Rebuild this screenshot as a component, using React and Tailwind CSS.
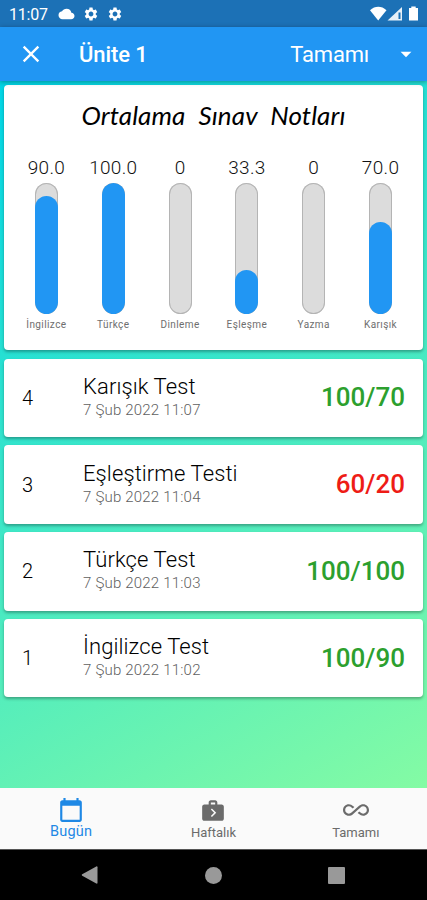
import React from "react";
import {
  MdAllInclusive,
  MdArrowDropDown,
  MdCalendarToday,
  MdClose,
  MdCloud,
  MdNextWeek,
  MdSettings,
} from "react-icons/md";

const averages = [
  { label: "İngilizce", value: "90.0", percent: 90 },
  { label: "Türkçe", value: "100.0", percent: 100 },
  { label: "Dinleme", value: "0", percent: 0 },
  { label: "Eşleşme", value: "33.3", percent: 33.3 },
  { label: "Yazma", value: "0", percent: 0 },
  { label: "Karışık", value: "70.0", percent: 70 },
];

const exams = [
  { id: 4, title: "Karışık Test", date: "7 Şub 2022 11:07", score: "100/70", passed: true },
  { id: 3, title: "Eşleştirme Testi", date: "7 Şub 2022 11:04", score: "60/20", passed: false },
  { id: 2, title: "Türkçe Test", date: "7 Şub 2022 11:03", score: "100/100", passed: true },
  { id: 1, title: "İngilizce Test", date: "7 Şub 2022 11:02", score: "100/90", passed: true },
];

function StatusBar() {
  return (
    <div className="flex h-[27px] shrink-0 items-center bg-[#1c71b6] pr-2 pl-[9px] text-white">
      <span className="w-[39px] pt-[2px] text-[16px] leading-none tracking-[-0.2px]">11:07</span>
      <MdCloud className="ml-[10px] h-[16px] w-[17px]" />
      <MdSettings className="ml-2 size-4" />
      <MdSettings className="ml-2 size-4" />
      <svg className="ml-auto" width="49" height="16" viewBox="0 0 49 16" fill="currentColor">
        <path d="M0 4.2C5-.4 11.500-.4 16.500 4.200L8.200 14.500z" />
        <path d="M32 1v13.500H17.500z" fillOpacity=".9" />
        <path d="M28.500 6.500h2v6.500h-2z" fill="#1c71b6" />
        <path d="M39 2h2.300V.5h4.400V2H48v12.500h-9z" />
      </svg>
    </div>
  );
}

function AppBar() {
  return (
    <header className="z-10 flex h-[54px] shrink-0 items-center bg-[#2196f3] pr-[8px] pl-[17px] text-white shadow-[0_1px_5px_rgba(0,0,0,0.35)]">
      <MdClose className="size-[28px]" />
      <h1 className="ml-[34px] text-[22px] font-medium tracking-[-0.1px]">Ünite 1</h1>
      <span className="ml-auto text-[22px] tracking-[-0.2px]">Tamamı</span>
      <MdArrowDropDown className="ml-[24px] size-[26px]" />
    </header>
  );
}

function AverageBar({ label, value, percent }) {
  return (
    <div className="flex flex-1 flex-col items-center">
      <span className="text-[19px] leading-[22px] font-light tracking-[0.3px] text-[#111]">{value}</span>
      <div className="mt-[4px] flex h-[131px] w-[23px] items-end overflow-hidden rounded-full bg-[#dcdcdc] ring-1 ring-[#b4b4b4] ring-inset">
        <div className="w-full rounded-full bg-[#2196f3]" style={{ height: `${percent}%` }} />
      </div>
      <span className="mt-[5px] text-[10px] leading-[12px] tracking-[0.4px] text-[#6e6e6e]">{label}</span>
    </div>
  );
}

function AverageCard() {
  return (
    <section className="h-[265px] rounded-[4px] bg-white shadow-[0_2px_3px_rgba(0,0,0,0.3)]">
      <h2 className="pt-[13px] text-center font-['Lato',sans-serif] text-[26px] leading-[34px] tracking-[0.1px] text-black italic [word-spacing:7px]">
        Ortalama Sınav Notları
      </h2>
      <div className="mt-[25px] flex px-[9px]">
        {averages.map((a) => (
          <AverageBar key={a.label} {...a} />
        ))}
      </div>
    </section>
  );
}

function ExamCard({ exam }) {
  return (
    <li className="flex h-[78.500px] items-center rounded-[4px] bg-white px-[18px] shadow-[0_2px_3px_rgba(0,0,0,0.3)]">
      <span className="w-[61px] text-[20px] font-light text-black">{exam.id}</span>
      <div className="flex-1 pb-[2px]">
        <p className="text-[22px] leading-[26px] font-light tracking-[0.1px] text-black">{exam.title}</p>
        <p className="text-[15px] leading-[20px] font-light tracking-[0.2px] text-[#5f5f5f]">{exam.date}</p>
      </div>
      <span className={exam.passed ? "text-[26px] font-medium text-[#2ca02e]" : "text-[26px] font-medium text-[#ee1c16]"}>
        {exam.score}
      </span>
    </li>
  );
}

function BottomTabs() {
  return (
    <nav className="flex h-[61px] shrink-0 bg-[#fafafa] text-[#6b6b6b]">
      <div className="flex flex-1 flex-col items-center pt-[9px] text-[#1e88e5]">
        <MdCalendarToday className="size-[26px]" />
        <span className="text-[14.500px] leading-[18px] tracking-[0.2px]">Bugün</span>
      </div>
      <div className="flex flex-1 flex-col items-center pt-[9px]">
        <MdNextWeek className="size-[26px]" />
        <span className="pt-px text-[13px] leading-[18px]">Haftalık</span>
      </div>
      <div className="flex flex-1 flex-col items-center pt-[9px]">
        <MdAllInclusive className="size-[26px]" />
        <span className="pt-px text-[13px] leading-[18px]">Tamamı</span>
      </div>
    </nav>
  );
}

function SystemNav() {
  return (
    <div className="flex h-[51px] shrink-0 items-center justify-between border-t border-[#555] bg-black pr-[82px] pl-[81px]">
      <svg width="17" height="18" viewBox="0 0 17 18" fill="#999">
        <path d="M16.500 1.200v15.600c0 .8-.6 1-1.200.7L1.200 9.700c-.6-.4-.6-1 0-1.400L15.300.5c.6-.3 1.200-.1 1.200.7z" />
      </svg>
      <div className="size-[17px] rounded-full bg-[#999]" />
      <div className="size-[17px] rounded-[1px] bg-[#999]" />
    </div>
  );
}

export default function App() {
  return (
    <div className="flex h-screen w-full flex-col overflow-hidden font-['Roboto',sans-serif]">
      <StatusBar />
      <AppBar />
      <main className="flex-1 bg-linear-[150deg] from-[#00d5e6] to-[#84fba4] px-1 pt-1">
        <AverageCard />
        <ul className="mt-[8.500px] flex flex-col gap-[8.300px]">
          {exams.map((exam) => (
            <ExamCard key={exam.id} exam={exam} />
          ))}
        </ul>
      </main>
      <BottomTabs />
      <SystemNav />
    </div>
  );
}
